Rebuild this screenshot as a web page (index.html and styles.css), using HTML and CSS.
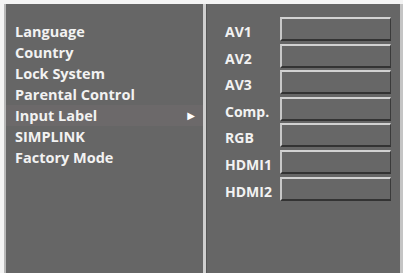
FILE: index.html
```html
<!DOCTYPE html>
<html lang="en">
<head>
    <meta charset="UTF-8">
    <title>Input Label</title>
    <link rel="stylesheet" href="styles.css">
</head>
<body>
    <div class="screen">
        <div class="menu-panel">
            <ul class="menu-list">
                <li>Language</li>
                <li>Country</li>
                <li>Lock System</li>
                <li>Parental Control</li>
                <li class="selected">Input Label <span class="arrow">&#9654;</span></li>
                <li>SIMPLINK</li>
                <li>Factory Mode</li>
            </ul>
        </div>
        <div class="divider"></div>
        <div class="label-panel">
            <div class="label-row"><span class="input-name">AV1</span><div class="label-box"></div></div>
            <div class="label-row"><span class="input-name">AV2</span><div class="label-box"></div></div>
            <div class="label-row"><span class="input-name">AV3</span><div class="label-box"></div></div>
            <div class="label-row"><span class="input-name">Comp.</span><div class="label-box"></div></div>
            <div class="label-row"><span class="input-name">RGB</span><div class="label-box"></div></div>
            <div class="label-row"><span class="input-name">HDMI1</span><div class="label-box"></div></div>
            <div class="label-row"><span class="input-name">HDMI2</span><div class="label-box"></div></div>
        </div>
    </div>
</body>
</html>
```

FILE: styles.css
```css
html, body {
    margin: 0;
    height: 100%;
    background-color: #f4f4f4;
    overflow: hidden;
}

body {
    padding: 4px 0 0 4px;
    box-sizing: border-box;
    font-family: "Open Sans", "DejaVu Sans", sans-serif;
    font-weight: 700;
    color: #f2f2f2;
}

.screen {
    display: flex;
    height: 269px;
    width: 399px;
    background-color: #666666;
    border-left: 2px solid #b8b8b8;
    border-right: 3px solid #c4c4c4;
    box-sizing: border-box;
}

.menu-panel {
    width: 197px;
    padding-top: 17px;
}

.menu-list {
    list-style: none;
    margin: 0;
    padding: 0;
}

.menu-list li {
    height: 21px;
    line-height: 21px;
    padding-left: 9px;
    padding-right: 8px;
    font-size: 14.5px;
    display: flex;
    justify-content: space-between;
}

.menu-list li.selected {
    background-color: #6c696a;
}

.arrow {
    font-size: 10px;
    color: #ffffff;
}

.divider {
    width: 3px;
    background-color: #cfcfcf;
    border-right: 1px solid #555555;
}

.label-panel {
    flex: 1;
    padding: 13px 0 0 18px;
    display: flex;
    flex-direction: column;
    gap: 2.6px;
}

.label-row {
    display: flex;
    align-items: center;
    height: 24px;
}

.input-name {
    width: 55px;
    padding-top: 5px;
    font-size: 14px;
}

.label-box {
    width: 111px;
    height: 24px;
    box-sizing: border-box;
    background-color: #676767;
    border-top: 2px solid #d2d2d2;
    border-left: 2px solid #c8c8c8;
    border-bottom: 2px solid #333333;
    border-right: 1px solid #3a3a3a;
}
```
